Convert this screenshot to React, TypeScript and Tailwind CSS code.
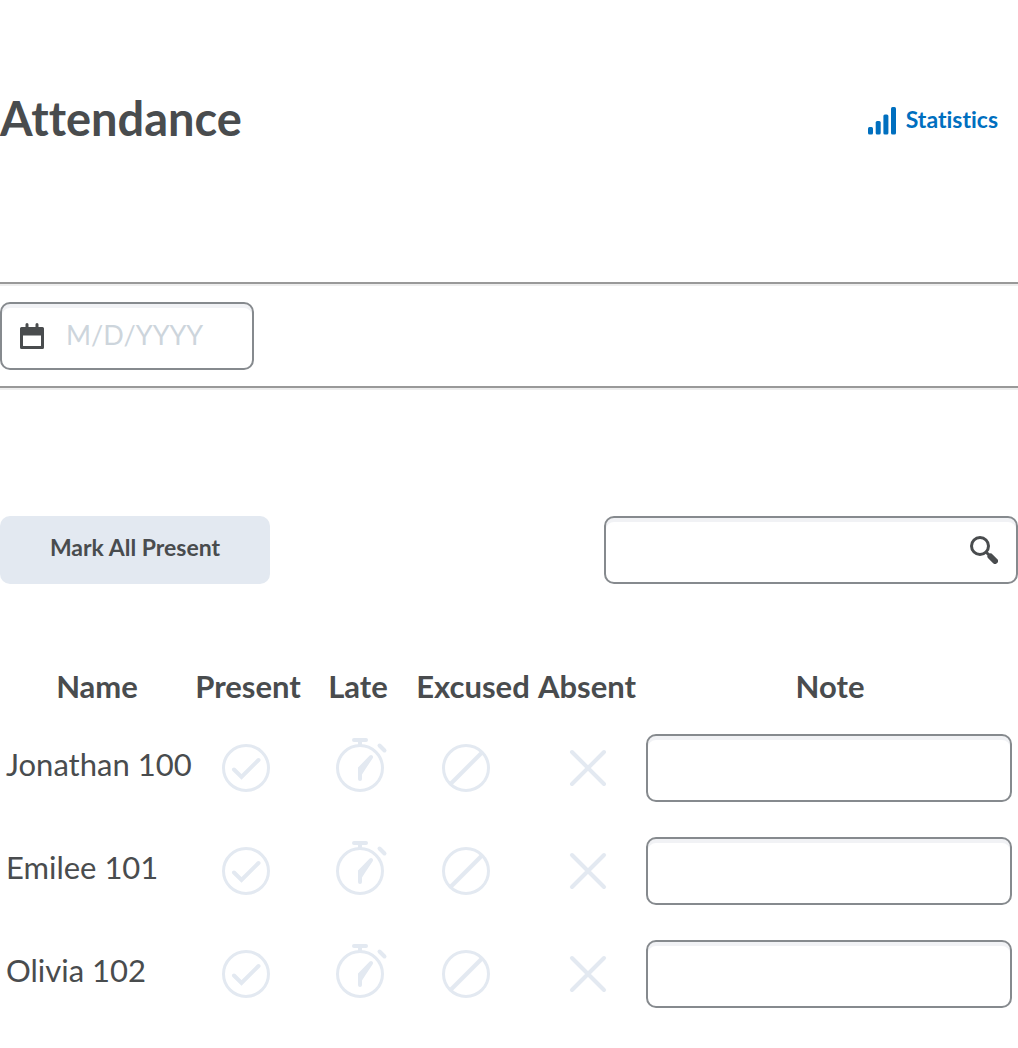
import React, { useState } from "react";

const fieldClass =
  "h-[68px] w-full rounded-[10px] border-2 border-[#868a8e] bg-white text-[30px] text-[#494c4e] shadow-[inset_0_4px_0_0_#f1f2f5] outline-none focus:border-[#006fbf]";

type Status = "present" | "late" | "excused" | "absent";

const statuses: { key: Status; label: string; cell: string }[] = [
  { key: "present", label: "Present", cell: "pr-1" },
  { key: "late", label: "Late", cell: "pl-1" },
  { key: "excused", label: "Excused", cell: "pr-[14px]" },
  { key: "absent", label: "Absent", cell: "pl-0.5" },
];

const students = ["Jonathan 100", "Emilee 101", "Olivia 102"];

function StatusIcon({ status }: { status: Status }) {
  return (
    <svg
      viewBox="0 0 60 60"
      className="size-[60px]"
      fill="none"
      stroke="currentColor"
      strokeWidth="3"
      strokeLinecap="round"
      aria-hidden="true"
    >
      {status !== "absent" && <circle cx="30" cy="30" r="22.5" />}
      {status === "present" && <path d="M18 31.5l7.5 7.5L42.5 22" strokeWidth="4" />}
      {status === "late" && (
        <>
          <path d="M24 2h12" strokeWidth="4" />
          <path d="M30 3v5" strokeWidth="4" strokeLinecap="butt" />
          <path d="M49.5 7.500l5 5" strokeWidth="4" />
          <path
            d="M28 29.500L39.700 17.600a2 2 0 0 1 3 2.600L35.500 31 32 36.500V41a2 2 0 0 1-4 0z"
            fill="currentColor"
            stroke="none"
          />
        </>
      )}
      {status === "excused" && <path d="M15 45.500L45.500 15" strokeWidth="4" />}
      {status === "absent" && <path d="M14 14l32 32M46 14L14 46" strokeWidth="4" />}
    </svg>
  );
}

function StatisticsIcon() {
  return (
    <svg viewBox="0 0 28 28" className="size-7" fill="currentColor" aria-hidden="true">
      <rect x="0" y="20" width="5" height="7.500" rx="1.500" />
      <rect x="7.700" y="14" width="5" height="13.500" rx="1.500" />
      <rect x="15.400" y="7.500" width="5" height="20" rx="1.500" />
      <rect x="23" y="0" width="5" height="27.500" rx="1.500" />
    </svg>
  );
}

function CalendarIcon() {
  return (
    <svg viewBox="0 0 24 26" className="h-[26px] w-6 shrink-0" fill="currentColor" aria-hidden="true">
      <path
        fillRule="evenodd"
        d="M5.500 4V1.500a1.500 1.500 0 0 1 3 0V4h7V1.500a1.500 1.500 0 0 1 3 0V4H22.500A1.500 1.500 0 0 1 24 5.500v19a1.500 1.500 0 0 1-1.500 1.500h-21A1.500 1.500 0 0 1 0 24.500v-19A1.500 1.500 0 0 1 1.500 4zM3 12.500V22.500a.5.5 0 0 0 .5.5h17a.5.5 0 0 0 .5-.5V12.500z"
      />
    </svg>
  );
}

function SearchIcon() {
  return (
    <svg viewBox="0 0 28 28" className="size-7" fill="none" stroke="currentColor" aria-hidden="true">
      <circle cx="10" cy="10" r="8.500" strokeWidth="3" />
      <path d="M16 16l4 4" strokeWidth="3" />
      <path d="M20.500 20.500l4.500 4.500" strokeWidth="6" strokeLinecap="round" />
    </svg>
  );
}

export default function App() {
  const [marks, setMarks] = useState<Record<string, Status>>({});

  const markAll = () => {
    const next: Record<string, Status> = {};
    students.forEach((s) => (next[s] = "present"));
    setMarks(next);
  };

  return (
    <main className="min-h-screen bg-white font-['Lato',sans-serif] text-[#494c4e] [font-variant-ligatures:none]">
      <header className="flex items-center justify-between pt-[86px] pr-5">
        <h1 className="text-[47px] leading-[64px] font-bold">Attendance</h1>
        <a href="#statistics" className="flex items-end gap-2.5 pt-1 text-[#006fbf]">
          <StatisticsIcon />
          <span className="pb-0.5 text-[23px] leading-7 font-bold">Statistics</span>
        </a>
      </header>

      <div className="mt-[132px] border-t-2 border-[#999999]">
        <div className="border-t-2 border-[#eeeeee] py-4">
          <label
            className="flex h-[68px] w-[254px] items-center gap-[22px] rounded-[10px] border-2 border-[#868a8e] px-[18px] shadow-[inset_0_4px_0_0_#f1f2f5]"
          >
            <CalendarIcon />
            <input
              type="text"
              aria-label="Date"
              placeholder="M/D/YYYY"
              className="w-full min-w-0 bg-transparent pb-0.5 text-[27px] leading-9 outline-none placeholder:text-[#cdd5dc]"
            />
          </label>
        </div>
      </div>
      <div className="h-1 border-t-2 border-b-2 border-t-[#999999] border-b-[#eeeeee]" />

      <div className="mt-[126px] flex items-center justify-between">
        <button
          type="button"
          onClick={markAll}
          className="h-[68px] w-[270px] rounded-[10px] bg-[#e3e9f1] pb-1.5 text-[23px] leading-8 font-bold"
        >
          Mark All Present
        </button>
        <div className="relative w-[414px]">
          <input type="search" aria-label="Search students" className={`${fieldClass} pr-16 pl-4`} />
          <button type="button" aria-label="Search" className="absolute top-5 right-5">
            <SearchIcon />
          </button>
        </div>
      </div>

      <table className="mt-[70px] w-full table-fixed leading-10">
        <colgroup>
          <col className="w-[194px]" />
          <col className="w-[108px]" />
          <col className="w-[112px]" />
          <col className="w-[118px]" />
          <col className="w-[110px]" />
          <col />
        </colgroup>
        <thead>
          <tr className="h-[62px] align-top text-[31px]">
            <th scope="col" className="pt-3 font-bold">Name</th>
            {statuses.map((s) => (
              <th key={s.key} scope="col" className="pt-3 font-bold">
                {s.label}
              </th>
            ))}
            <th scope="col" className="pt-3 font-bold">Note</th>
          </tr>
        </thead>
        <tbody>
          {students.map((name) => (
            <tr key={name} className="h-[103px]">
              <th scope="row" className="pb-2 pl-1.5 text-left text-[31px] font-normal whitespace-nowrap">
                {name}
              </th>
              {statuses.map((s) => (
                <td key={s.key} className={s.cell}>
                  <button
                    type="button"
                    aria-label={`${s.label}: ${name}`}
                    aria-pressed={marks[name] === s.key}
                    onClick={() => setMarks({ ...marks, [name]: s.key })}
                    className="mx-auto block text-[#e3e9f1] aria-pressed:text-[#006fbf]"
                  >
                    <StatusIcon status={s.key} />
                  </button>
                </td>
              ))}
              <td className="pr-1.5 pl-1">
                <input type="text" aria-label={`Note for ${name}`} className={`${fieldClass} block px-4`} />
              </td>
            </tr>
          ))}
        </tbody>
      </table>
    </main>
  );
}
